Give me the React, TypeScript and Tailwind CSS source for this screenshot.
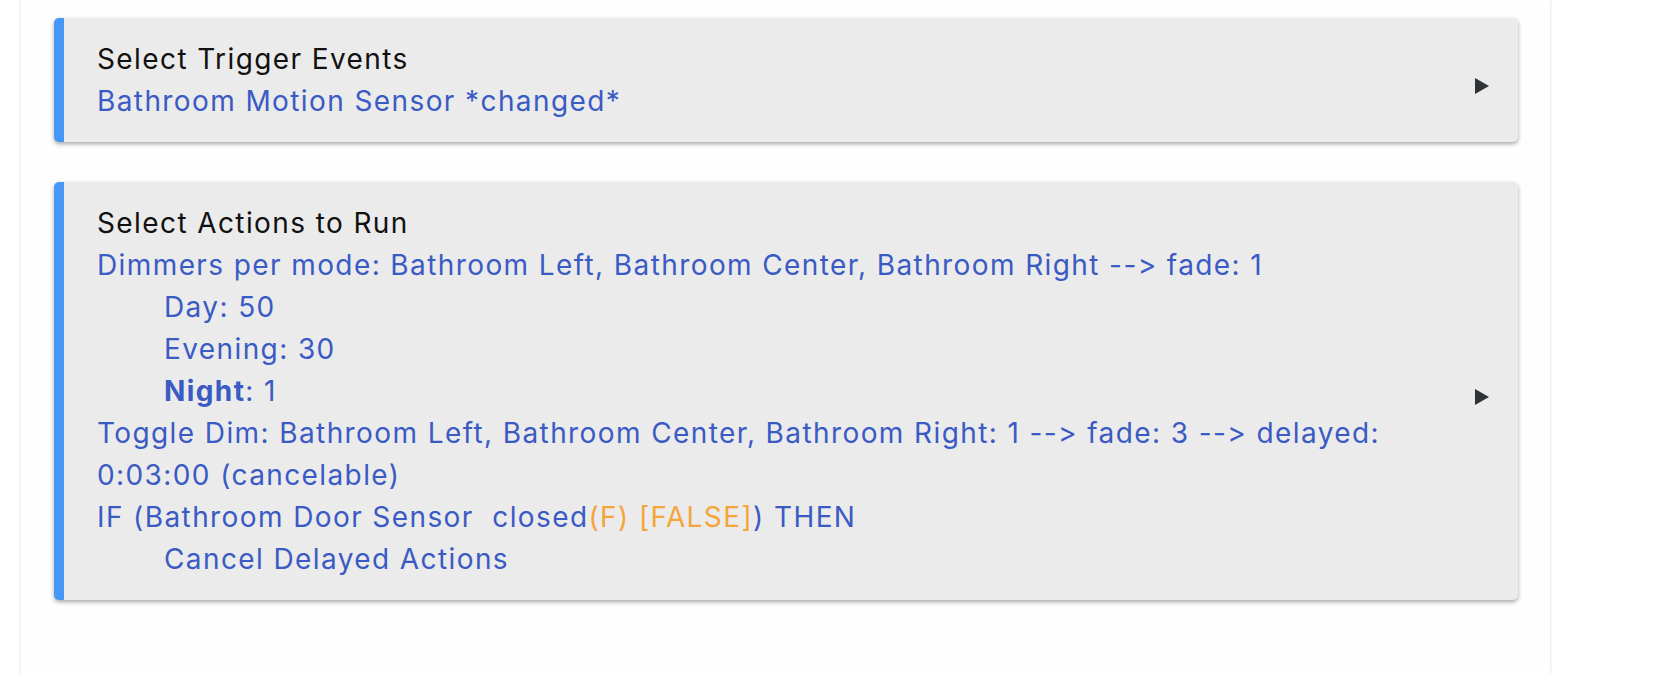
function Arrow() {
  return (
    <svg className="w-[14px] h-[16px] mt-[11px] flex-shrink-0" viewBox="0 0 14 16">
      <path d="M0 0L14 8L0 16Z" fill="#2f3236" />
    </svg>
  );
}

function Card({ title, children }: { title: string; children: React.ReactNode }) {
  return (
    <div className="flex items-center bg-[#ebebeb] border-l-[10px] border-[#4897f6] rounded-[5px] shadow-[0_2px_4px_rgba(0,0,0,0.35)] pl-[33px] pr-[29px] py-[20px]">
      <div className="flex-1 pr-[40px]">
        <div className="text-[#111]">{title}</div>
        <div className="text-[#3a5ac4]">{children}</div>
      </div>
      <Arrow />
    </div>
  );
}

export default function App() {
  return (
    <div
      className="h-[674px] bg-white overflow-hidden text-[28px] leading-[42px] tracking-[1.4px] [font-feature-settings:'calt'_0,'liga'_0]"
      style={{ fontFamily: "Inter, Roboto, 'Liberation Sans', sans-serif" }}
    >
      <div className="ml-[21px] w-[1529px] h-full bg-[#fefefe] shadow-[0_0_3px_rgba(0,0,0,0.18)] pl-[33px] pr-[32px] pt-[18px] flex flex-col gap-[40px]">
        <Card title="Select Trigger Events">Bathroom Motion Sensor *changed*</Card>

        <Card title="Select Actions to Run">
          <div>Dimmers per mode: Bathroom Left, Bathroom Center, Bathroom Right --&gt; fade: 1</div>
          <div className="pl-[67px]">Day: 50</div>
          <div className="pl-[67px]">Evening: 30</div>
          <div className="pl-[67px]">
            <span className="font-bold">Night</span>: 1
          </div>
          <div>Toggle Dim: Bathroom Left, Bathroom Center, Bathroom Right: 1 --&gt; fade: 3 --&gt; delayed: 0:03:00 (cancelable)</div>
          <div className="whitespace-pre">
            IF (Bathroom Door Sensor  closed<span className="text-[#f5a53a]">(F) [FALSE]</span>) THEN
          </div>
          <div className="pl-[67px]">Cancel Delayed Actions</div>
        </Card>
      </div>
    </div>
  );
}
